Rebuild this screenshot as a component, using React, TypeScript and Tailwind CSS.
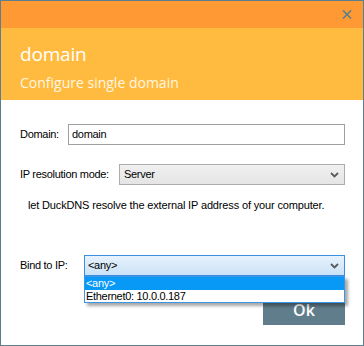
import React from 'react';

const sans = { fontFamily: "'Liberation Sans', Arial, sans-serif" };

function Chevron() {
  return (
    <svg width="9" height="6" viewBox="0 0 9 6" className="shrink-0">
      <polyline points="1,1 4.5,4.5 8,1" fill="none" stroke="#5a5a5a" strokeWidth="1.8" />
    </svg>
  );
}

export default function App() {
  return (
    <div className="w-[364px] h-[346px] border border-[#5b7f8e] flex flex-col bg-white overflow-hidden">
      {/* Title bar */}
      <div className="h-[27px] bg-[#ff9933] flex items-center justify-end pr-[11px] shrink-0">
        <svg width="10" height="9" viewBox="0 0 10 9">
          <path d="M1 0.5 L9 8.5 M9 0.5 L1 8.5" stroke="#5b7f8e" strokeWidth="1.6" />
        </svg>
      </div>

      {/* Header */}
      <div
        className="h-[72px] bg-[#ffbb3f] shrink-0 pl-[19px] pt-[14px] text-white"
        style={{ fontFamily: "'Open Sans', 'Noto Sans', sans-serif" }}
      >
        <div className="text-[19px] leading-[24px] tracking-[-0.2px]">domain</div>
        <div className="text-[14px] leading-[18px] mt-[8px] text-[#fff6e2]">Configure single domain</div>
      </div>

      {/* Body */}
      <div className="relative flex-1 pl-[19px] pr-[18px] pt-[24px] text-[11px] text-black tracking-[-0.3px]" style={sans}>
        <div className="flex items-center h-[21px]">
          <span className="w-[48px] shrink-0">Domain:</span>
          <div className="flex-1 h-[21px] border border-[#a0a0a0] bg-white flex items-center pl-[3px]">domain</div>
        </div>

        <div className="flex items-center h-[21px] mt-[19px]">
          <span className="w-[99px] shrink-0">IP resolution mode:</span>
          <div className="flex-1 h-[21px] border border-[#acacac] bg-gradient-to-b from-[#f0f0f0] to-[#e5e5e5] flex items-center justify-between pl-[4px] pr-[5px]">
            <span>Server</span>
            <Chevron />
          </div>
        </div>

        <div className="ml-[8px] mt-[14px] leading-[13px] tracking-[-0.15px]">
          let DuckDNS resolve the external IP address of your computer.
        </div>

        <div className="flex items-center h-[21px] mt-[43px]">
          <span className="w-[64px] shrink-0">Bind to IP:</span>
          <div className="relative flex-1 h-[21px]">
            <div className="h-[21px] border border-[#3c8ee0] bg-gradient-to-b from-[#e8f2fc] to-[#cae2f7] flex items-center justify-between pl-[3px] pr-[5px]">
              <span>&lt;any&gt;</span>
              <Chevron />
            </div>
            {/* Open dropdown list */}
            <div className="absolute left-0 right-0 top-[21px] z-10 border border-[#3c96e6] bg-white shadow-[3px_3px_3px_rgba(0,0,0,0.35)]">
              <div className="h-[13px] leading-[13px] bg-[#0899f7] text-white pl-[1px]">&lt;any&gt;</div>
              <div className="h-[12px] leading-[12px] pl-[1px]">Ethernet0: 10.0.0.187</div>
            </div>
          </div>
        </div>

        <div className="flex justify-end mt-[19px]">
          <button
            className="w-[82px] h-[30px] bg-[#607d8b] text-white text-[16px] font-semibold tracking-normal"
            style={{ fontFamily: "'Open Sans', 'Noto Sans', sans-serif" }}
          >
            Ok
          </button>
        </div>
      </div>
    </div>
  );
}
